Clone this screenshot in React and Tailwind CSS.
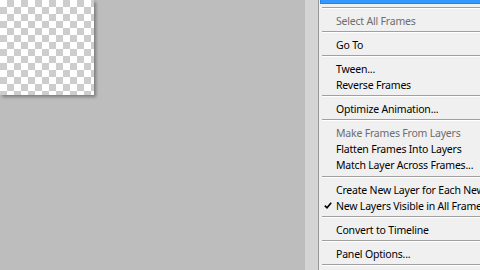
import React from "react";

const Sep = () => (
  <div className="h-[8px] flex flex-col justify-center pl-[2px]">
    <div className="h-px bg-[#a0a0a0]" />
    <div className="h-px bg-white" />
  </div>
);

const Item = ({ children, disabled, checked }) => (
  <div className={`h-[16px] flex items-center pt-[2px] pl-[16px] whitespace-nowrap relative ${disabled ? "text-[#6d6d6d]" : "text-black"}`}>
    {checked && (
      <svg className="absolute left-[4px] top-[5px]" width="8" height="7" viewBox="0 0 8 7">
        <path d="M0.8 3.6 L3 5.8 L7.2 0.8" fill="none" stroke="#000" strokeWidth="1.6" />
      </svg>
    )}
    {children}
  </div>
);

export default function App() {
  return (
    <div className="w-[480px] h-[270px] overflow-hidden flex bg-[#bdbdbd] font-['Noto_Sans',sans-serif] text-[10.5px] tracking-[-0.2px] leading-none">
      <div className="w-[305px] shrink-0 relative">
        <div className="w-[94px] h-[95px] shadow-[2px_2px_3px_rgba(0,0,0,0.35)] bg-[conic-gradient(#cdcdcd_25%,#ffffff_0_50%,#cdcdcd_0_75%,#ffffff_0)] bg-[length:14px_14px]" />
      </div>
      <div className="w-[13px] shrink-0 bg-[#d4d4d4]" />
      <div className="w-px shrink-0 bg-[#979797]" />
      <div className="w-[240px] shrink-0 bg-[#f0f0f0] flex flex-col pl-px">
        <div className="h-[4px] overflow-hidden">
          <div className="mt-[-12px] h-[16px] bg-[#3399ff] border border-[#2b80e6] flex items-center pl-[15px] text-white whitespace-nowrap">
            Paste Frames...
          </div>
        </div>
        <Sep />
        <Item disabled>Select All Frames</Item>
        <Sep />
        <Item>Go To</Item>
        <Sep />
        <Item>Tween...</Item>
        <Item>Reverse Frames</Item>
        <Sep />
        <Item>Optimize Animation...</Item>
        <Sep />
        <Item disabled>Make Frames From Layers</Item>
        <Item>Flatten Frames Into Layers</Item>
        <Item>Match Layer Across Frames...</Item>
        <div className="h-px" />
        <Sep />
        <Item>Create New Layer for Each New Frame</Item>
        <Item checked>New Layers Visible in All Frames</Item>
        <Sep />
        <Item>Convert to Timeline</Item>
        <Sep />
        <Item>Panel Options...</Item>
        <Sep />
      </div>
    </div>
  );
}
